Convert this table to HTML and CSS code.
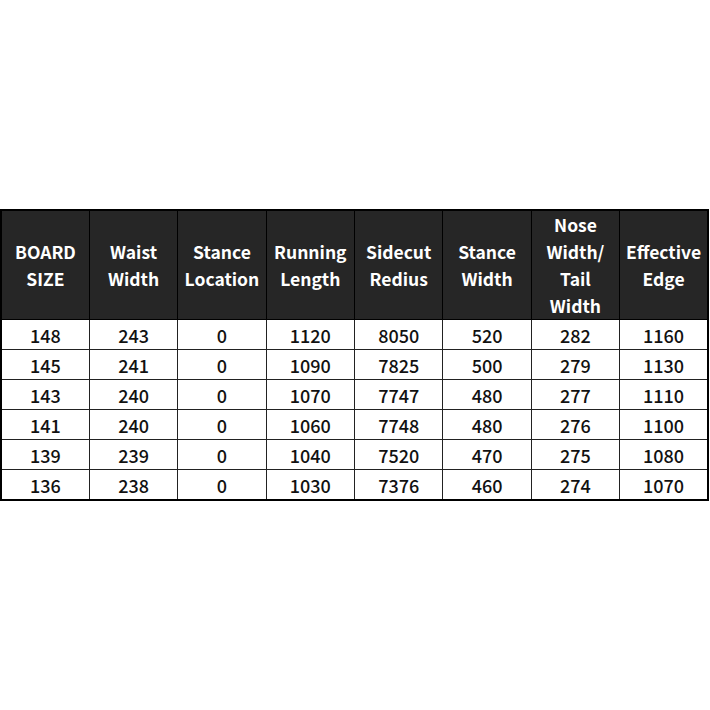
FILE: index.html
```html
<!DOCTYPE html>
<html>
<head>
<meta charset="utf-8">
<link rel="stylesheet" href="styles.css">
</head>
<body>
<div class="page">
<table class="spec">
<thead>
<tr>
<th>BOARD<br>SIZE</th>
<th>Waist<br>Width</th>
<th>Stance<br>Location</th>
<th>Running<br>Length</th>
<th>Sidecut<br>Redius</th>
<th>Stance<br>Width</th>
<th>Nose<br>Width/<br>Tail<br>Width</th>
<th>Effective<br>Edge</th>
</tr>
</thead>
<tbody>
<tr><td>148</td><td>243</td><td>0</td><td>1120</td><td>8050</td><td>520</td><td>282</td><td>1160</td></tr>
<tr><td>145</td><td>241</td><td>0</td><td>1090</td><td>7825</td><td>500</td><td>279</td><td>1130</td></tr>
<tr><td>143</td><td>240</td><td>0</td><td>1070</td><td>7747</td><td>480</td><td>277</td><td>1110</td></tr>
<tr><td>141</td><td>240</td><td>0</td><td>1060</td><td>7748</td><td>480</td><td>276</td><td>1100</td></tr>
<tr><td>139</td><td>239</td><td>0</td><td>1040</td><td>7520</td><td>470</td><td>275</td><td>1080</td></tr>
<tr><td>136</td><td>238</td><td>0</td><td>1030</td><td>7376</td><td>460</td><td>274</td><td>1070</td></tr>
</tbody>
</table>
</div>
</body>
</html>
```

FILE: styles.css
```css
html, body {
  margin: 0;
  padding: 0;
  background: #ffffff;
}
.page {
  width: 710px;
  height: 710px;
  display: flex;
  align-items: center;
  justify-content: flex-start;
}
.spec {
  width: 709px;
  border-collapse: collapse;
  table-layout: fixed;
  border: 2px solid #000;
  font-family: "Noto Sans CJK JP", "Noto Sans", sans-serif;
  font-size: 17.5px;
  color: #111;
}
.spec th {
  background: #262626;
  color: #fff;
  font-weight: 700;
  line-height: 27px;
  height: 107px;
  padding: 0;
  border: 1px solid #000;
  text-align: center;
  vertical-align: middle;
}
.spec td {
  height: 29px;
  padding: 0;
  line-height: 28px;
  border: 1px solid #222;
  text-align: center;
  vertical-align: middle;
  font-weight: 500;
  font-size: 18px;
}
```
